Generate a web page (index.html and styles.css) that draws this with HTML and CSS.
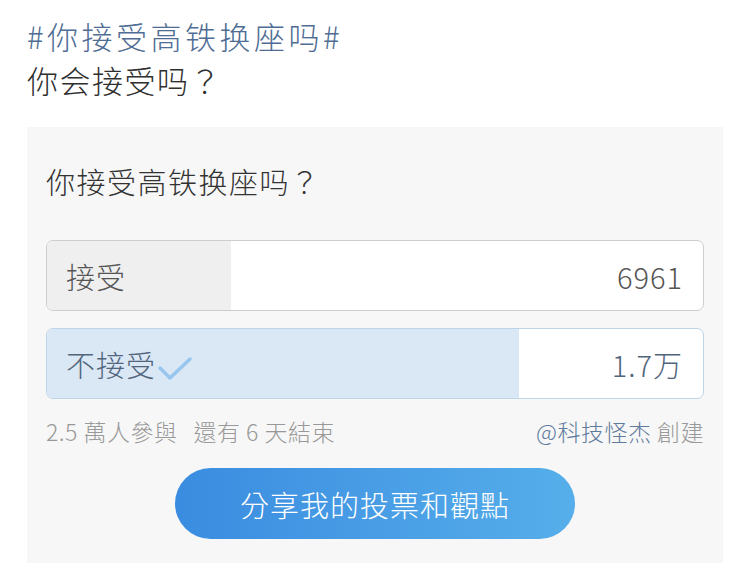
FILE: index.html
```html
<!DOCTYPE html>
<html lang="zh-TW">
<head>
    <meta charset="UTF-8">
    <meta name="viewport" content="width=device-width, initial-scale=1.0">
    <title>你接受高铁换座吗</title>
    <link rel="stylesheet" href="styles.css">
</head>
<body>
    <div class="post">
        <p class="topic">#你接受高铁换座吗#</p>
        <p class="post-text">你会接受吗？</p>
    </div>

    <div class="poll">
        <h2 class="poll-title">你接受高铁换座吗？</h2>

        <div class="option">
            <div class="option-fill" style="width: 28%"></div>
            <span class="option-label">接受</span>
            <span class="option-count">6961</span>
        </div>

        <div class="option voted">
            <div class="option-fill" style="width: 72%"></div>
            <span class="option-label">不接受
                <svg class="check" width="38" height="28" viewBox="0 0 38 28">
                    <path d="M4 14 L14 24 L34 5" fill="none" stroke="#98c6ef" stroke-width="3.5" stroke-linecap="round" stroke-linejoin="round"/>
                </svg>
            </span>
            <span class="option-count">1.7万</span>
        </div>

        <div class="poll-meta">
            <span><span class="meta-count">2.5 萬人參與</span>還有 6 天結束</span>
            <span><span class="author">@科技怪杰</span> 創建</span>
        </div>

        <button class="share-btn">分享我的投票和觀點</button>
    </div>
</body>
</html>
```

FILE: styles.css
```css
* {
    box-sizing: border-box;
    margin: 0;
    padding: 0;
}

body {
    font-family: "Noto Sans CJK TC", "Noto Sans", sans-serif;
    font-weight: 300;
    background-color: #fff;
    color: #333;
    width: 735px;
    height: 576px;
    overflow: hidden;
}

.post {
    padding: 14px 0 0 27px;
    font-size: 31px;
    line-height: 44px;
    letter-spacing: 1.5px;
}

.topic {
    color: #4f6d94;
    letter-spacing: 3.5px;
}

.post-text {
    color: #2f2f2f;
}

.poll {
    margin: 25px 12px 0 27px;
    background-color: #f7f7f7;
    padding: 36px 19px 24px 19px;
}

.poll-title {
    font-size: 29px;
    font-weight: 300;
    color: #333;
    line-height: 36px;
    letter-spacing: 1.5px;
    margin-bottom: 41px;
}

.option {
    position: relative;
    height: 71px;
    border: 1px solid #cdcdcd;
    border-radius: 7px;
    background-color: #fff;
    display: flex;
    align-items: center;
    justify-content: space-between;
    padding: 0 20px 0 19px;
    overflow: hidden;
    margin-bottom: 17px;
}

.option-fill {
    position: absolute;
    left: 0;
    top: 0;
    bottom: 0;
    background-color: #efefef;
}

.option.voted {
    border-color: #bfd4e6;
}

.option.voted .option-fill {
    background-color: #dae7f4;
}

.option-label,
.option-count {
    position: relative;
    font-size: 29px;
    letter-spacing: 1px;
    color: #555;
}

.option.voted .option-label,
.option.voted .option-count {
    color: #51657c;
}

.option-label {
    display: flex;
    align-items: center;
}

.check {
    margin-left: 0;
    margin-top: 8px;
}

.poll-meta {
    display: flex;
    justify-content: space-between;
    font-size: 23px;
    color: #999;
    line-height: 30px;
    letter-spacing: 0.5px;
    margin-top: 3px;
}

.meta-count {
    margin-right: 16px;
}

.author {
    color: #5e7a9c;
}

.share-btn {
    display: block;
    width: 400px;
    height: 71px;
    margin: 22px auto 0;
    border: none;
    border-radius: 36px;
    background: linear-gradient(to right, #3a8ce0, #56aeea);
    color: #fff;
    font-family: inherit;
    font-weight: 300;
    font-size: 29px;
    letter-spacing: 1px;
}
```
